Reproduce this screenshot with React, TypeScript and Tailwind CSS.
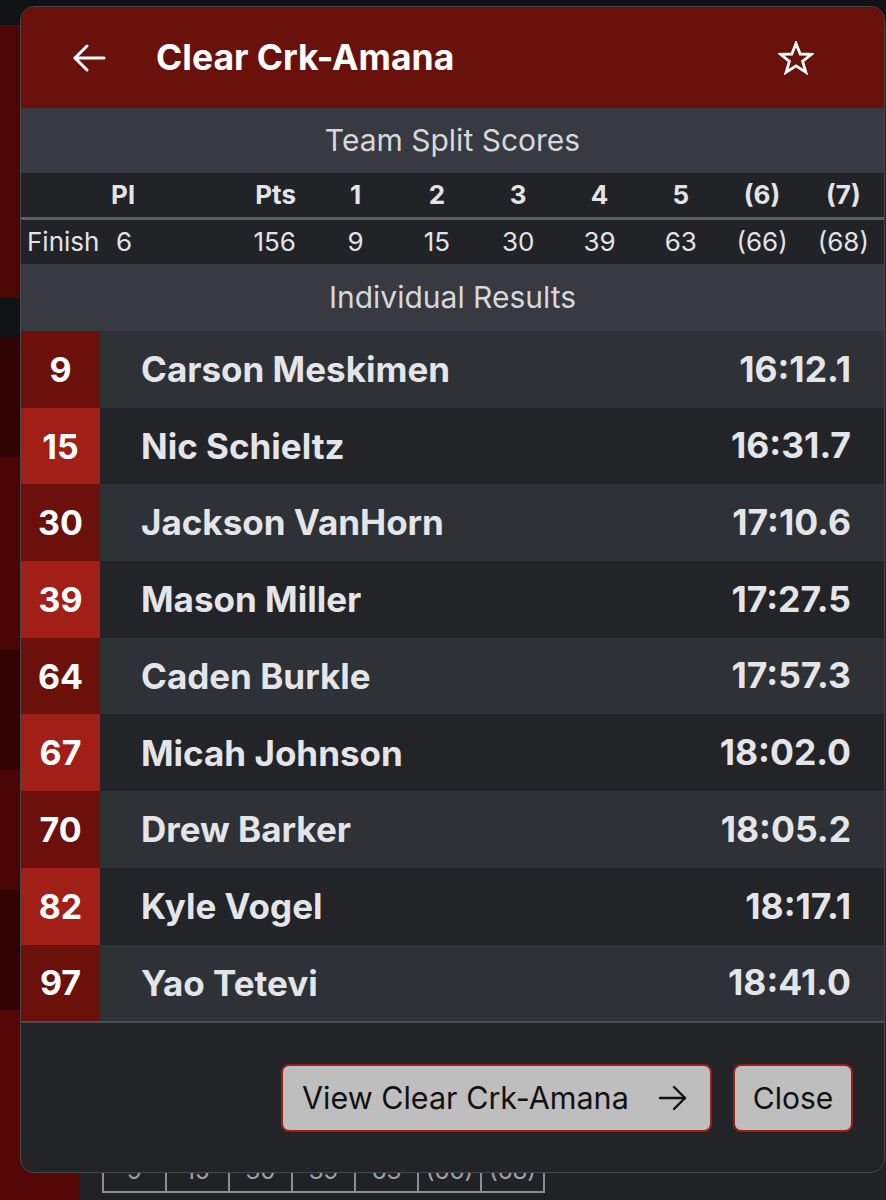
import React from "react";

const rows = [
  { pl: "9", name: "Carson Meskimen", time: "16:12.1" },
  { pl: "15", name: "Nic Schieltz", time: "16:31.7" },
  { pl: "30", name: "Jackson VanHorn", time: "17:10.6" },
  { pl: "39", name: "Mason Miller", time: "17:27.5" },
  { pl: "64", name: "Caden Burkle", time: "17:57.3" },
  { pl: "67", name: "Micah Johnson", time: "18:02.0" },
  { pl: "70", name: "Drew Barker", time: "18:05.2" },
  { pl: "82", name: "Kyle Vogel", time: "18:17.1" },
  { pl: "97", name: "Yao Tetevi", time: "18:41.0" },
];

const splits = ["1", "2", "3", "4", "5", "(6)", "(7)"];
const splitVals = ["9", "15", "30", "39", "63", "(66)", "(68)"];
const bgVals = ["9", "15", "30", "39", "63", "(66)", "(68)"];

function BackArrow() {
  return (
    <svg width="34" height="30" viewBox="0 0 34 30" fill="none" stroke="white" strokeWidth="3" strokeLinecap="round" strokeLinejoin="round">
      <path d="M3 15 H32" />
      <path d="M15 3 L3 15 L15 27" />
    </svg>
  );
}

function StarIcon() {
  return (
    <svg width="36" height="34" viewBox="0 0 36 34" fill="none" stroke="white" strokeWidth="2.8" strokeLinejoin="miter">
      <path d="M18 2.5 L22.2 13 L33.5 13.3 L24.6 20.3 L27.9 31.3 L18 24.9 L8.1 31.3 L11.4 20.3 L2.5 13.3 L13.8 13 Z" />
    </svg>
  );
}

function RightArrow() {
  return (
    <svg width="30" height="26" viewBox="0 0 30 26" fill="none" stroke="#111" strokeWidth="2.4" strokeLinecap="round" strokeLinejoin="round">
      <path d="M2 13 H27" />
      <path d="M16 2 L27 13 L16 24" />
    </svg>
  );
}

export default function App() {
  const font = { fontFamily: "Inter, 'Noto Sans', Arial, sans-serif" };
  return (
    <div className="relative w-[886px] h-[1200px] overflow-hidden bg-[#202226]" style={font}>
      {/* background page */}
      <div className="h-[25px] bg-[#101215]" />
      <div className="flex">
        <div className="w-[80px] flex flex-col">
          <div className="h-[273px] bg-[#4b0606]" />
          <div className="h-[39px] bg-[#101215]" />
          <div className="h-[120px] bg-[#320303]" />
          <div className="h-[193px] bg-[#4a0505]" />
          <div className="h-[120px] bg-[#320303]" />
          <div className="h-[120px] bg-[#4a0505]" />
          <div className="h-[120px] bg-[#320303]" />
          <div className="h-[190px] bg-[#560707]" />
        </div>
        <div className="flex-1 pl-[22px] pt-[1126px]">
          <div className="flex w-max border-b-2 border-l-2 border-[#8b8d90]">
            {bgVals.map((v, i) => (
              <div key={i} className="w-[63px] h-[40px] border-r-2 border-[#8b8d90] flex items-center justify-center text-[24px] text-[#a0a2a5] leading-none">
                {v}
              </div>
            ))}
          </div>
        </div>
      </div>

      {/* modal */}
      <div className="absolute left-[20px] top-[6px] w-[865px] h-[1167px] rounded-[14px] border border-[#45484d] overflow-hidden bg-[#222428] flex flex-col">
        {/* header */}
        <div className="h-[101px] bg-[#6b110c] flex items-center pl-[51px] pr-[70px] shrink-0">
          <BackArrow />
          <div className="ml-[50px] text-white text-[35.5px] font-bold">Clear Crk-Amana</div>
          <div className="ml-auto">
            <StarIcon />
          </div>
        </div>

        {/* team split scores */}
        <div className="h-[65px] bg-[#373a41] flex items-center justify-center text-[30px] text-[#d6d8db]">
          Team Split Scores
        </div>
        <div className="bg-[#212327] text-[#e2e4e7]">
          <div className="grid grid-cols-[88px_26px_180px_repeat(7,1fr)] h-[44px] items-center font-bold text-[26px] leading-none">
            <div />
            <div className="text-right">Pl</div>
            <div className="text-right pr-[19px]">Pts</div>
            {splits.map((s) => (
              <div key={s} className="text-center">{s}</div>
            ))}
          </div>
          <div className="h-[3px] bg-[#5a5d62]" />
          <div className="grid grid-cols-[88px_26px_180px_repeat(7,1fr)] h-[44px] items-center text-[26px] leading-none">
            <div className="pl-[6px]">Finish</div>
            <div className="text-right pr-[3px]">6</div>
            <div className="text-right pr-[19px]">156</div>
            {splitVals.map((s, i) => (
              <div key={i} className="text-center">{s}</div>
            ))}
          </div>
        </div>
        <div className="h-[67px] bg-[#373a41] flex items-center justify-center text-[30px] text-[#d6d8db]">
          Individual Results
        </div>

        {/* individual rows */}
        <div className="flex flex-col">
          {rows.map((r, i) => (
            <div
              key={r.pl}
              className={`flex h-[76.7px] items-center ${i % 2 === 0 ? "bg-[#2e3136]" : "bg-[#222428]"}`}
            >
              <div
                className={`w-[79px] h-full flex items-center justify-center text-white font-bold text-[34px] ${
                  i % 2 === 0 ? "bg-[#6b100b]" : "bg-[#a11f17]"
                }`}
              >
                {r.pl}
              </div>
              <div className="pl-[41px] text-[#e3e5e8] font-bold text-[35px]">{r.name}</div>
              <div className="ml-auto pr-[33px] text-[#e3e5e8] font-bold text-[35.5px]">{r.time}</div>
            </div>
          ))}
        </div>
        <div className="h-[2px] bg-[#4a4d52]" />

        {/* footer */}
        <div className="flex-1 flex justify-end items-start pt-[41px] pr-[31px] gap-[21px]">
          <button className="w-[431px] h-[68px] rounded-[8px] border-2 border-[#9c1e17] bg-[#bebebe] flex items-center justify-between pl-[19px] pr-[22px] text-[30.5px] text-[#111]">
            <span>View Clear Crk-Amana</span>
            <RightArrow />
          </button>
          <button className="w-[120px] h-[68px] rounded-[8px] border-2 border-[#9c1e17] bg-[#bebebe] flex items-center justify-center text-[30px] text-[#111]">
            Close
          </button>
        </div>
      </div>
    </div>
  );
}
